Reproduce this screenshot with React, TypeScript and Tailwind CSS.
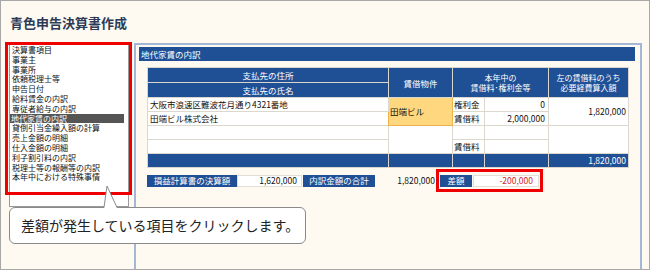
import React from "react";

const items = [
  "決算書項目",
  "事業主",
  "事業所",
  "依頼税理士等",
  "申告日付",
  "給料賃金の内訳",
  "専従者給与の内訳",
  "地代家賃の内訳",
  "貸倒引当金繰入額の計算",
  "売上金額の明細",
  "仕入金額の明細",
  "利子割引料の内訳",
  "税理士等の報酬等の内訳",
  "本年中における特殊事情",
];

const th = "bg-[#1f5096] text-white font-normal border border-[#d9d6ce] p-0 leading-[10px] text-center align-middle";
const th2 = "bg-[#1f5096] text-white font-normal border border-[#d9d6ce] p-0 text-[8px] leading-[10px] text-center align-middle";
const td = "bg-white border border-[#dcd8cf] p-0 leading-none text-[#111] align-middle";
const tb = "bg-[#1f5096] border border-[#d9d6ce] p-0 leading-none text-white align-middle";

export default function App() {
  return (
    <div className="w-[650px] h-[270px] bg-[#fefaf2] border border-[#a8a8a8] relative overflow-hidden font-['Noto_Sans_CJK_JP',sans-serif]">
      <div className="h-[42px] pl-[9px] pt-[13px] text-[13px] font-bold text-[#2d3b57] leading-[18px]">
        青色申告決算書作成
      </div>
      <div className="flex">
        {/* left panel */}
        <div className="w-[133px] relative">
          <div className="ml-[8px] w-[120px] h-[164px] bg-white border border-[#9a9a9a] pt-[1px] text-[8px] leading-[9.8px] text-[#111]">
            {items.map((it, i) => (
              <div
                key={it}
                className={
                  i === 7
                    ? "h-[9.8px] pl-[1px] mr-[4px] bg-[#555555] text-white whitespace-nowrap"
                    : "h-[9.8px] pl-[2px] whitespace-nowrap"
                }
              >
                {it}
              </div>
            ))}
          </div>
          <div className="absolute left-[4px] top-[-1px] w-[127px] h-[153px] border-[3px] border-[#ee0000]" />
        </div>
        {/* right panel */}
        <div className="w-[508px] h-[226px] border-t-2 border-l-2 border-r-2 border-[#a3b7d6]">
          <div className="ml-[3px] mt-[2px] w-[496px] h-[14px] bg-[#1f5096] text-white text-[8.5px] leading-[14px] pl-[2px]">
            地代家賃の内訳
          </div>
          <table className="table-fixed border-collapse ml-[11px] mt-[6px] w-[481px] text-[8.5px]">
            <colgroup>
              <col className="w-[241px]" />
              <col className="w-[64px]" />
              <col className="w-[32px]" />
              <col className="w-[64px]" />
              <col className="w-[80px]" />
            </colgroup>
            <thead>
              <tr className="h-[15px]">
                <th className={th}>支払先の住所</th>
                <th className={th} rowSpan={2}>賃借物件</th>
                <th className={th2} colSpan={2} rowSpan={2}>
                  本年中の
                  <br />
                  賃借料･権利金等
                </th>
                <th className={th2} rowSpan={2}>
                  左の賃借料のうち
                  <br />
                  必要経費算入額
                </th>
              </tr>
              <tr className="h-[15px]">
                <th className={th}>支払先の氏名</th>
              </tr>
            </thead>
            <tbody>
              <tr className="h-[14px]">
                <td className={`${td} pl-[2px] whitespace-nowrap`}>大阪市浪速区難波花月通り4321番地</td>
                <td className="bg-[#fed77e] border border-[#efb24c] p-0 pl-[1px] leading-none text-[#111]" rowSpan={2}>
                  田端ビル
                </td>
                <td className={`${td} pl-[1px]`}>権利金</td>
                <td className={`${td} text-right pr-[3px]`}>0</td>
                <td className={`${td} text-right pr-[2px]`} rowSpan={2}>
                  1,820,000
                </td>
              </tr>
              <tr className="h-[14px]">
                <td className={`${td} pl-[2px]`}>田端ビル株式会社</td>
                <td className={`${td} pl-[1px]`}>賃借料</td>
                <td className={`${td} text-right pr-[3px]`}>2,000,000</td>
              </tr>
              <tr className="h-[14px]">
                <td className={td}></td>
                <td className={td} rowSpan={2}></td>
                <td className={td}></td>
                <td className={td}></td>
                <td className={td} rowSpan={2}></td>
              </tr>
              <tr className="h-[14px]">
                <td className={td}></td>
                <td className={`${td} pl-[1px]`}>賃借料</td>
                <td className={td}></td>
              </tr>
              <tr className="h-[14px]">
                <td className={tb}></td>
                <td className={tb}></td>
                <td className={tb}></td>
                <td className={tb}></td>
                <td className={`${tb} text-right pr-[2px]`}>1,820,000</td>
              </tr>
            </tbody>
          </table>
          <div className="flex items-center ml-[11px] mt-[1px] text-[8.5px] leading-none">
            <div className="w-[90px] h-[12px] bg-[#1f5096] text-white flex items-center justify-center">
              損益計算書の決算額
            </div>
            <div className="w-[65px] h-[12px] bg-white border border-[#e2ded6] flex items-center justify-end pr-[4px] text-[#111]">
              1,620,000
            </div>
            <div className="w-[72px] h-[12px] ml-[1px] bg-[#1f5096] text-white flex items-center justify-center">
              内訳金額の合計
            </div>
            <div className="w-[61px] h-[12px] bg-[#fefaf2] flex items-center justify-end pr-[1px] text-[#111]">
              1,820,000
            </div>
            <div className="w-[107px] h-[23px] border-[3px] border-[#ee0000] flex items-center pl-[1px]">
              <div className="w-[32px] h-[12px] bg-[#1f5096] text-white flex items-center justify-center">
                差額
              </div>
              <div className="w-[66px] h-[12px] ml-[1px] bg-white border border-[#e2ded6] flex items-center justify-end pr-[5px] text-[#d4262b]">
                -200,000
              </div>
            </div>
          </div>
        </div>
      </div>
      {/* callout */}
      <div className="absolute left-[8px] top-[206px] w-[297px] h-[37px] bg-white border border-[#8a8a8a] rounded-[6px] flex items-center pl-[11px] text-[14px] text-[#222] whitespace-nowrap">
        差額が発生している項目をクリックします。
      </div>
      <svg className="absolute left-[100px] top-[184px]" width="20" height="24" viewBox="0 0 20 24">
        <polygon points="3,23 6,1 16,23" fill="#ffffff" />
        <polyline points="3,22.5 6,1 16,22.5" fill="none" stroke="#8a8a8a" strokeWidth="1" />
      </svg>
    </div>
  );
}
